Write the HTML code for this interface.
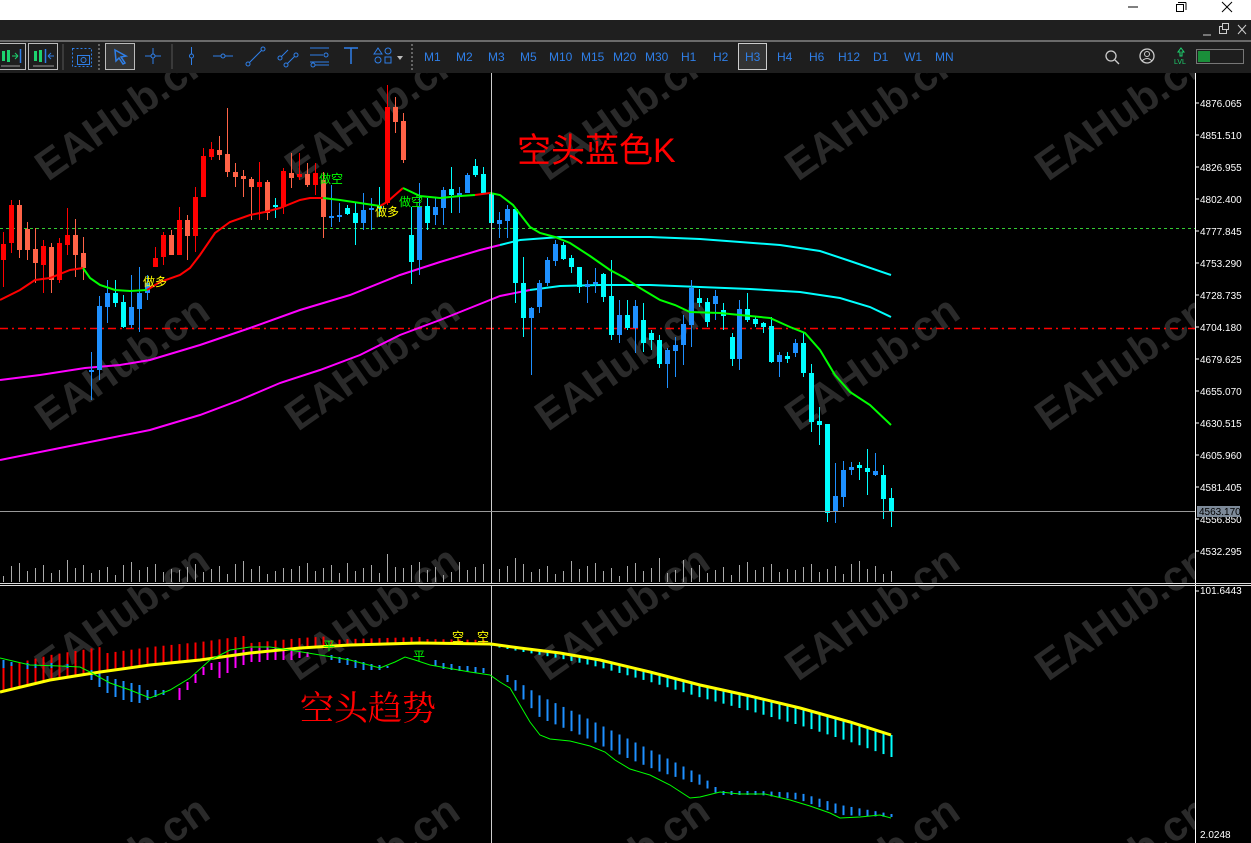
<!DOCTYPE html>
<html><head><meta charset="utf-8">
<style>
*{margin:0;padding:0;box-sizing:border-box}
html,body{width:1251px;height:843px;overflow:hidden}
body{background:#000;font-family:"Liberation Sans","Noto Sans CJK SC",sans-serif;position:relative}
#top{position:absolute;left:0;top:0;width:1251px;height:20px;background:#fff}
#bar2{position:absolute;left:0;top:20px;width:1251px;height:21px;background:#1f1f1f}
#sep{position:absolute;left:0;top:40px;width:1251px;height:2px;background:#6a6a6a}
#tb{position:absolute;left:0;top:42px;width:1251px;height:31px;background:#1e1e1e}
#tfs{position:absolute;left:0;top:42px;width:1251px;height:30px;z-index:3}
.tf{position:absolute;top:8px;font-size:12px;color:#2f7fe8}
svg{position:absolute;left:0;top:0;z-index:2;overflow:hidden}
</style></head><body>
<div id="top"></div><div id="bar2"></div><div id="sep"></div><div id="tb"></div>
<svg id="s" width="1251" height="843" xmlns="http://www.w3.org/2000/svg"></svg>
<div id="tfs">
<span class="tf" style="left:424px">M1</span><span class="tf" style="left:456px">M2</span><span class="tf" style="left:488px">M3</span><span class="tf" style="left:520px">M5</span><span class="tf" style="left:549px">M10</span><span class="tf" style="left:581px">M15</span><span class="tf" style="left:613px">M20</span><span class="tf" style="left:645px">M30</span><span class="tf" style="left:681px">H1</span><span class="tf" style="left:713px">H2</span><span class="tf" style="left:745px">H3</span><span class="tf" style="left:777px">H4</span><span class="tf" style="left:809px">H6</span><span class="tf" style="left:838px">H12</span><span class="tf" style="left:873px">D1</span><span class="tf" style="left:904px">W1</span><span class="tf" style="left:935px">MN</span>
</div>
<script>
var S=document.getElementById('s'),h='';
function L(x1,y1,x2,y2,c,w,da){h+='<line x1="'+x1+'" y1="'+y1+'" x2="'+x2+'" y2="'+y2+'" stroke="'+c+'" stroke-width="'+(w||1)+'"'+(da?' stroke-dasharray="'+da+'"':'')+'/>';}
function R(x,y,w,hh,c,st){h+='<rect x="'+x+'" y="'+y+'" width="'+w+'" height="'+hh+'" fill="'+(c||'none')+'"'+(st?' stroke="'+st+'"':'')+'/>';}
function P(pts,c,w){h+='<polyline points="'+pts.map(p=>p.join(',')).join(' ')+'" fill="none" stroke="'+c+'" stroke-width="'+(w||1)+'"/>';}
function T(x,y,t,c,fs,ex){h+='<text x="'+x+'" y="'+y+'" fill="'+c+'" font-size="'+fs+'" '+(ex||'')+'>'+t+'</text>';}
function interp(pts,x){for(var i=0;i<pts.length-1;i++){if(x>=pts[i][0]&&x<=pts[i+1][0]){var t=(x-pts[i][0])/(pts[i+1][0]-pts[i][0]);return pts[i][1]+t*(pts[i+1][1]-pts[i][1]);}}return pts[x<pts[0][0]?0:pts.length-1][1];}
h+='<defs><clipPath id="cc"><rect x="0" y="73" width="1251" height="770"/></clipPath></defs>';
L(1128,7,1138,7,'#000');R(1176.5,4.5,7,7,'none','#000');L(1178,2.5,1186,2.5,'#000');L(1186,2.5,1186,10,'#000');L(1222,2,1232,12,'#000');L(1232,2,1222,12,'#000');
L(1203,35,1211,35,'#ccc');R(1219.5,26.5,7,7,'#1f1f1f','#ccc');R(1222.5,23.5,6,6,'#1f1f1f','#ccc');L(1238,25,1246,34,'#ccc');L(1246,25,1238,34,'#ccc');
R(-0.5,43.5,26,26,'none','#bbb');R(28.5,43.5,29,26,'none','#bbb');
R(2,51,3,10,'#1dd36f');R(7,50,3,12,'#1dd36f');L(12,56,17,56,'#1dd36f');L(15,53,18,56,'#1dd36f');L(15,59,18,56,'#1dd36f');L(20.5,49,20.5,63,'#2f7fe8',1.5);L(1,66,20,66,'#999');
R(34,51,3,10,'#1dd36f');R(39,50,3,12,'#1dd36f');L(45.5,49,45.5,63,'#2f7fe8',1.5);L(48,56,54,56,'#2f7fe8');L(48,56,51,53,'#2f7fe8');L(48,56,51,59,'#2f7fe8');L(33,66,54,66,'#999');
L(63,44,63,70,'#555');
h+='<rect x="72.5" y="48.5" width="19" height="18" fill="none" stroke="#2f7fe8" stroke-dasharray="2,2"/>';
R(77.5,55.5,12,9,'none','#2f7fe8');h+='<circle cx="83.5" cy="60" r="2.5" fill="none" stroke="#2f7fe8"/>';
L(99,44,99,70,'#aaa',1,'2,2');
R(105.5,43.5,29,26,'#333','#bbb');h+='<path d="M115 50 L126 56 L121 57 L125 63 L123 64 L119 58 L116 61 Z" fill="none" stroke="#2f7fe8" stroke-width="1.5"/>';
L(145,56,161,56,'#2f7fe8');L(153,48,153,64,'#2f7fe8');h+='<circle cx="153" cy="56" r="2" fill="#1e1e1e" stroke="#2f7fe8"/>';
L(172,44,172,69,'#555');
L(191.5,47,191.5,65,'#2f7fe8');h+='<circle cx="191.5" cy="56" r="2" fill="#1e1e1e" stroke="#2f7fe8"/>';
L(213,56,233,56,'#2f7fe8');h+='<circle cx="223" cy="56" r="2" fill="#1e1e1e" stroke="#2f7fe8"/>';
L(249,63,262,50,'#2f7fe8');h+='<circle cx="248" cy="64" r="2" fill="#1e1e1e" stroke="#2f7fe8"/><circle cx="263" cy="49" r="2" fill="#1e1e1e" stroke="#2f7fe8"/>';
L(281,57,288,50,'#2f7fe8');L(287,64,295,56,'#2f7fe8');h+='<circle cx="280" cy="58" r="2" fill="#1e1e1e" stroke="#2f7fe8"/><circle cx="296" cy="55" r="2" fill="#1e1e1e" stroke="#2f7fe8"/><circle cx="286" cy="65" r="2" fill="#1e1e1e" stroke="#2f7fe8"/>';
L(310,48,329,48,'#2f7fe8');L(310,55,323,55,'#2f7fe8');L(310,62,329,62,'#2f7fe8');L(314,65,329,65,'#2f7fe8');
h+='<circle cx="326" cy="55" r="2" fill="#1e1e1e" stroke="#2f7fe8"/><circle cx="313" cy="65" r="2" fill="#1e1e1e" stroke="#2f7fe8"/>';
L(344,48,358,48,'#2f7fe8',1.5);L(351,48,351,64,'#2f7fe8',1.5);
h+='<path d="M374 54 L378 48 L382 54Z" fill="none" stroke="#2f7fe8"/><circle cx="388" cy="51" r="3" fill="none" stroke="#2f7fe8"/><circle cx="378" cy="60" r="3" fill="none" stroke="#2f7fe8"/><rect x="385" y="57" width="6" height="6" fill="none" stroke="#2f7fe8"/><path d="M397 56 L403 56 L400 60Z" fill="#bbb"/>';
L(412,44,412,70,'#aaa',1,'2,2');
R(738.5,43.5,28,26,'#333','#ccc');
h+='<circle cx="1111" cy="56" r="5" fill="none" stroke="#ccc" stroke-width="1.3"/>';L(1115,60,1119,64,'#ccc',1.3);
h+='<circle cx="1147" cy="56" r="7" fill="none" stroke="#ccc" stroke-width="1.3"/><circle cx="1147" cy="54" r="2.5" fill="none" stroke="#ccc"/><path d="M1142 61 Q1147 56 1152 61" fill="none" stroke="#ccc"/>';
h+='<path d="M1181 48 L1184 52 L1182 52 L1182 56 L1180 56 L1180 52 L1178 52Z" fill="none" stroke="#1dd36f"/>';T(1174,64,'LVL','#1dd36f',7);
R(1196.5,49.5,47,14,'none','#777');R(1198,51,12,11,'#1a8f3a');
var CT=73,SEP=584,AX=1195;
R(0,CT,AX,SEP-CT,'#000');
h+='<g clip-path="url(#cc)">';
for(var r=0;r<4;r++)for(var c=0;c<5;c++){var wx=48+c*250,wy=182+r*250;h+='<text x="'+wx+'" y="'+wy+'" fill="#2a2a2a" font-size="42" font-weight="bold" transform="rotate(-35 '+wx+' '+wy+')">EAHub.cn</text>';}
h+='</g>';
L(0,228.5,AX,228.5,'#33cc33',1,'3,3');
L(0,328.5,AX,328.5,'#ff0000',1.5,'8,4,2,4');
for(var i=0;i<112;i++){var x=3+i*8;var v=6+((i*37)%11)+((i*13)%7);if(i==48)v=28;if(i==64||i==82)v=24;L(x+.5,582,x+.5,582-v,'#aaa',1);}
P([[0,380],[40,375],[85,368],[120,365],[150,360],[200,345],[250,328],[300,310],[350,295],[400,275],[440,262],[480,250],[500,245]],'#ff00ff',2);
P([[500,245],[520,240],[560,237],[600,237],[650,237],[700,239],[740,242],[780,245],[820,251],[850,261],[891,275]],'#00ffff',2);
P([[0,460],[50,450],[100,440],[150,430],[200,415],[240,400],[280,383],[320,370],[360,355],[400,335],[440,320],[480,304],[500,296],[530,290]],'#ff00ff',2);
P([[530,290],[560,286],[600,285],[650,285],[700,287],[750,289],[800,292],[840,298],[870,307],[891,317]],'#00ffff',2);
var red='#ff0000',cor='#ff6347',cy='#00ffff',bl='#1e90ff';
var C=[[3,244,260,232,287,red],[11,205,243,200,253,red],[19,205,250,200,258,cor],[27,229,250,222,260,cor],[35,249,263,228,283,cor],[43,246,265,240,293,red],[51,247,280,243,293,cor],[59,243,280,238,283,red],[67,235,245,208,255,red],[75,235,255,219,277,cor],[83,253,268,237,280,cor],
[91,370,372,352,400,bl],[99,306,370,296,380,bl],[107,293,307,280,323,bl],[115,293,303,280,307,cy],[123,302,327,295,328,cy],[131,307,325,275,328,bl],[139,293,309,267,332,bl],[147,283,293,275,300,bl],
[155,258,267,247,267,red],[163,235,257,232,265,red],[171,235,255,230,255,cor],[179,220,255,207,255,red],[187,220,236,215,260,cor],[195,197,236,187,252,red],[203,156,197,148,197,red],[211,149,157,142,160,red],[219,150,155,136,160,cor],[227,154,172,108,177,cor],[235,172,177,163,187,cor],[243,176,179,170,197,cor],[251,179,187,177,220,cor],[259,182,187,162,220,red],[267,182,213,180,220,cor],[275,205,206,198,218,cy],[283,171,207,168,214,red],[291,173,178,153,188,cor],[299,174,177,153,180,red],[307,174,185,163,187,cor],[315,173,185,163,195,red],[323,180,217,172,238,cor],
[331,216,217,185,227,bl],[339,215,217,203,222,bl],[347,208,214,205,215,cy],[355,213,223,202,245,cy],[363,210,223,193,230,bl],[371,208,209,198,230,bl],[379,205,208,187,217,cy],
[387,107,203,85,205,red],[395,107,122,97,133,cor],[403,121,160,113,163,cor],
[411,235,262,207,284,cy],[419,206,260,183,275,bl],[427,206,223,198,230,cy],[435,207,215,198,225,bl],[443,190,208,187,225,bl],[451,189,195,167,213,cy],[459,193,197,187,213,bl],[467,175,193,173,193,bl],[475,166,175,159,177,cy],[483,174,193,167,193,cy],[491,193,223,193,227,cy],[499,220,224,212,238,bl],[507,209,221,205,238,bl],[515,209,283,207,303,cy],[523,283,318,257,337,cy],[531,308,318,307,375,bl],[539,283,307,280,313,bl],[547,260,283,257,286,bl],[555,244,261,240,266,bl],[563,245,259,242,260,cy],[571,258,267,255,273,cy],[579,267,287,267,293,cy],[587,284,287,280,303,bl],[595,282,284,268,293,bl],[603,274,297,273,302,cy],[611,296,335,260,340,cy],[619,315,335,300,343,bl],[627,315,328,300,330,cy],[635,306,328,300,353,bl],[643,320,343,303,352,cy],[651,333,340,330,350,cy],[659,340,364,335,368,cy],[667,350,364,348,388,bl],[675,345,351,337,377,bl],[683,324,345,315,365,bl],[691,288,325,280,347,bl],[699,298,303,289,307,cy],[707,302,322,298,327,cy],[715,296,304,290,320,bl],[723,310,316,303,330,cy],[732,337,359,333,366,cy],[739,309,359,300,370,bl],[747,309,320,293,322,cy],[755,319,324,317,327,cy],[763,323,327,322,333,cy],[771,326,362,317,363,cy],[779,355,362,352,377,bl],[787,356,359,352,363,cy],[795,343,353,339,357,bl],[803,343,373,333,377,cy],[811,373,422,364,432,cy],[819,421,425,407,445,cy],[827,424,513,424,522,cy],[835,496,512,463,523,bl],[843,470,497,461,507,bl],[851,467,470,462,475,bl],[859,465,468,462,480,cy],[867,468,472,449,495,cy],[875,471,475,453,476,bl],[883,475,499,465,519,cy],[891,498,512,488,527,cy]];
C.forEach(function(k){var x=k[0],t=Math.min(k[1],k[2]),b=Math.max(k[1],k[2]);L(x+.5,k[3],x+.5,k[4],k[5],1);R(x-2,t,5,Math.max(b-t,2),k[5]);});
P([[0,300],[20,290],[35,280],[50,278],[70,270],[83,268]],red,2);
P([[83,268],[90,278],[100,285],[115,290],[130,291],[147,290]],'#00ff00',2);
P([[147,290],[160,282],[180,275],[190,268],[200,255],[215,233],[230,222],[250,215],[265,212],[280,208],[300,200],[310,198],[323,198]],red,2);
P([[323,198],[340,200],[360,203],[380,206]],'#00ff00',2);
P([[380,206],[387,202],[403,188]],red,2);
P([[403,188],[420,196],[440,198],[460,196],[475,195]],'#00ff00',2);
P([[475,195],[490,193]],red,2);
P([[490,193],[500,195],[513,205],[530,227],[540,233],[555,237],[570,243],[590,256],[610,270],[625,278],[640,288],[660,300],[675,305],[690,312],[720,313],[740,315],[770,318],[790,327],[805,333],[820,350],[835,375],[850,392],[870,405],[891,425]],'#00ff00',2);
T(143,286,'做多','#ffff00',12);T(319,183,'做空','#00ff00',12);T(375,216,'做多','#ffff00',12);T(399,206,'做空','#00ff00',12);
T(517,162,'空头蓝色K','#ff0000',34);
L(491.5,CT,491.5,843,'#ccc',1);L(0,511.5,AX,511.5,'#999',1);
R(0,SEP,AX,2,'#000');L(0,583.5,AX,583.5,'#ddd');L(0,585.5,AX,585.5,'#ddd');
var Y=[[0,692],[50,680],[100,672],[150,665],[200,660],[250,653],[300,648],[350,645],[420,643],[491,644],[520,648],[560,653],[600,660],[650,672],[700,685],[750,696],[800,708],[850,722],[891,735]];
var G=[[0,658],[30,665],[60,666],[80,667],[90,672],[110,683],[130,690],[150,698],[170,690],[190,678],[210,660],[230,650],[250,647],[270,647],[290,650],[320,655],[350,660],[380,668],[395,662],[405,657],[415,660],[430,665],[470,672],[490,675],[500,682],[510,688],[520,705],[530,722],[540,735],[550,739],[570,741],[590,746],[605,752],[615,760],[630,769],[650,775],[670,785],[690,798],[700,797],[720,792],[740,794],[765,794],[790,800],[810,806],[830,813],[840,818],[860,817],[880,815],[891,818]];
for(var i=0;i<112;i++){var x=3+i*8,y=interp(Y,x);
 if(x<490){var len=x<100?25:(x<250?18:10);if(x>=330&&x<420)len=6;if(x>=420)len=4;
  L(x+.5,y,x+.5,y-len,red,2);
 } else {var len2=2+(x-491)/400*20;L(x+.5,y,x+.5,y+len2,cy,2);}
}
[[219,662,678],[227,655,673],[235,650,668],[243,650,665],[251,648,662],[259,648,662],[267,647,660],[275,648,660],[283,649,660],[291,650,660],[299,651,658],[307,652,657],[179,688,700],[187,682,690],[195,674,683],[203,667,675],[211,663,670]].forEach(function(b){L(b[0]+.5,b[1],b[0]+.5,b[2],'#ff00ff',2);});
[[3,660,668],[11,662,666],[27,663,669],[35,664,668],[51,663,668],[67,664,668],[91,670,680],[99,673,687],[107,676,693],[115,679,697],[123,681,700],[131,683,702],[139,685,703],[147,690,700],[155,690,697],[163,690,695],[331,655,660],[339,657,663],[347,658,665],[355,660,668],[363,662,670],[371,664,670],[379,665,670],[387,666,668],[435,660,666],[443,663,669],[451,664,670],[459,666,671],[467,666,672],[475,667,673],[483,668,673]].forEach(function(b){L(b[0]+.5,b[1],b[0]+.5,b[2],bl,2);});
var BT=[[507,675],[540,696],[580,715],[620,735],[660,755],[700,775],[720,791],[760,791],[800,793],[840,805],[891,814]],BB=[[507,682],[540,718],[580,735],[620,755],[660,772],[700,785],[720,795],[760,795],[800,800],[840,815],[891,817]];
for(var x=507;x<=891;x+=8){L(x+.5,interp(BT,x),x+.5,interp(BB,x),bl,2);}
P(Y,'#ffff00',3);P(G,'#00ff00',1);
T(323,650,'平','#00ff00',12);T(413,660,'平','#00ff00',12);T(452,641,'空','#ffff00',12);T(477,641,'空','#ffff00',12);
T(300,720,'空头趋势','#ff0000',34,'font-family="Liberation Serif,Noto Serif CJK SC,serif"');
R(AX,CT,56,843-CT,'#000');L(AX+.5,CT,AX+.5,843,'#fff');
var lv=['4876.065','4851.510','4826.955','4802.400','4777.845','4753.290','4728.735','4704.180','4679.625','4655.070','4630.515','4605.960','4581.405','4556.850','4532.295'];
lv.forEach(function(t,i){var y=103+i*32;L(AX,y,AX+4,y,'#fff');T(1200,y+4,t,'#fff',10);});
R(1197,506,43,11,'#7d8a99');T(1199,515,'4563.170','#000',10);
L(AX,591,AX+4,591,'#fff');T(1200,594,'101.6443','#fff',10);T(1200,838,'2.0248','#fff',10);
L(AX,583.5,1251,583.5,'#ddd');L(AX,585.5,1251,585.5,'#ddd');
S.innerHTML=h;
</script>
</body></html>
